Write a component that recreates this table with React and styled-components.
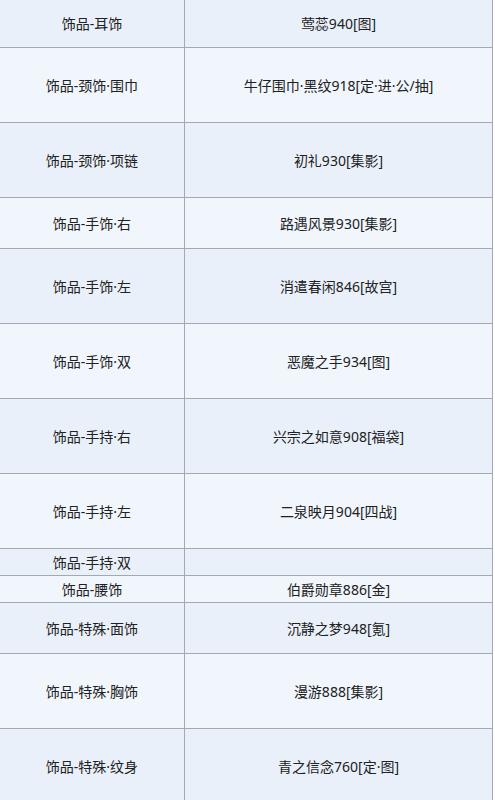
import React from "react";
import styled, { createGlobalStyle } from "styled-components";

const Global = createGlobalStyle`
  html, body { margin: 0; padding: 0; background: #ffffff; }
  body { font-family: "Noto Sans", "Noto Sans CJK SC", sans-serif; }
`;

const Table = styled.div`
  display: grid;
  grid-template-columns: 185px 308px;
  width: 493px;
  margin-top: -2px;
  color: #202122;
  font-size: 14px;
  line-height: 20px;
`;

const Cell = styled.div`
  display: flex;
  align-items: center;
  justify-content: center;
  box-sizing: border-box;
  height: ${(p) => p.$h}px;
  padding-top: 2px;
  background: ${(p) => (p.$dark ? "#eaf0f9" : "#f1f5fc")};
  border-right: 1px solid #a2a9b1;
  border-bottom: 1px solid #a2a9b1;
  white-space: nowrap;
`;

const rows = [
  ["饰品-耳饰", "莺蕊940[图]", 50],
  ["饰品-颈饰·围巾", "牛仔围巾·黑纹918[定·进·公/抽]", 75],
  ["饰品-颈饰·项链", "初礼930[集影]", 75],
  ["饰品-手饰·右", "路遇风景930[集影]", 51],
  ["饰品-手饰·左", "消遣春闲846[故宫]", 75],
  ["饰品-手饰·双", "恶魔之手934[图]", 75],
  ["饰品-手持·右", "兴宗之如意908[福袋]", 75],
  ["饰品-手持·左", "二泉映月904[四战]", 75],
  ["饰品-手持·双", "", 27],
  ["饰品-腰饰", "伯爵勋章886[金]", 27],
  ["饰品-特殊·面饰", "沉静之梦948[氪]", 51],
  ["饰品-特殊·胸饰", "漫游888[集影]", 75],
  ["饰品-特殊·纹身", "青之信念760[定·图]", 75],
];

export default function App() {
  return (
    <>
      <Global />
      <Table>
        {rows.map(([a, b, h], i) => (
          <React.Fragment key={i}>
            <Cell $h={h} $dark={i % 2 === 0}>{a}</Cell>
            <Cell $h={h} $dark={i % 2 === 0}>{b}</Cell>
          </React.Fragment>
        ))}
      </Table>
    </>
  );
}
